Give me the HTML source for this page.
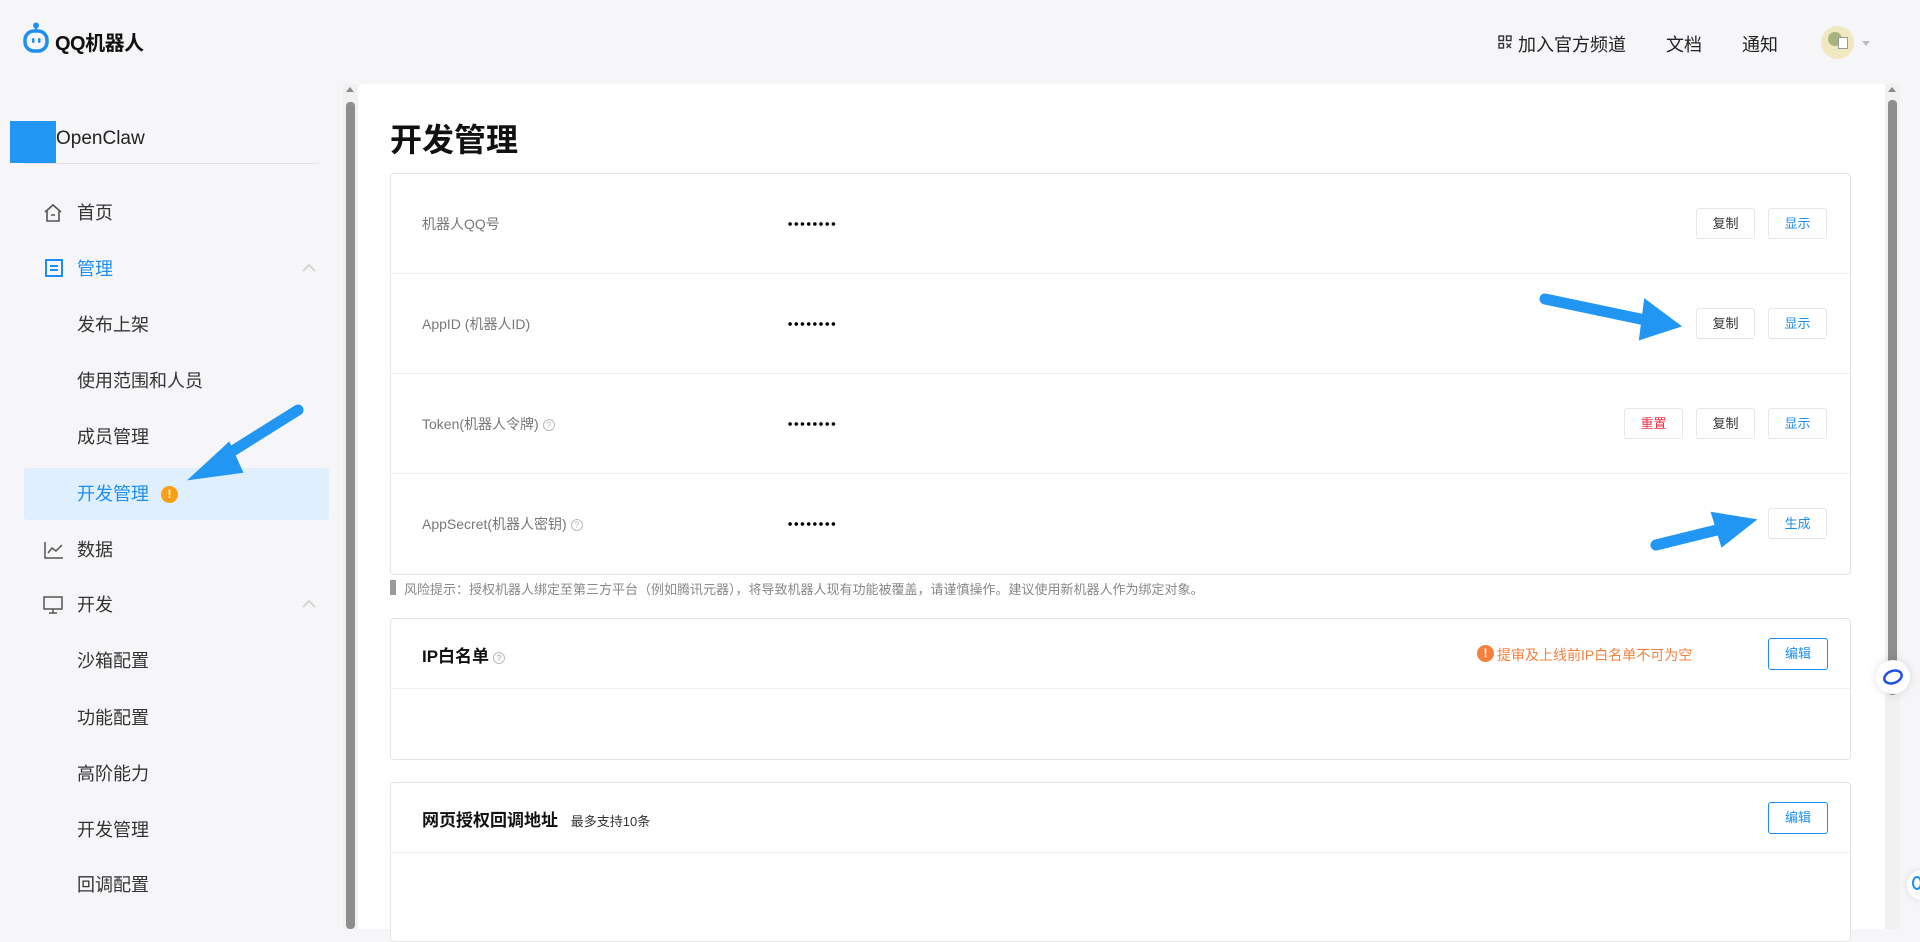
<!DOCTYPE html>
<html><head><meta charset="utf-8"><style>
*{margin:0;padding:0;box-sizing:border-box}
body{width:1920px;height:929px;overflow:hidden;background:#f6f6f8;font-family:"Liberation Sans","Noto Sans CJK SC",sans-serif;position:relative;color:#222}
.a{position:absolute}
.nav{font-size:18px;color:#222;top:31px}
.mi{position:absolute;left:77px;font-size:18px;color:#333;line-height:24px}
.card{position:absolute;left:390px;width:1461px;background:#fff;border:1px solid #e4e4e4;border-radius:4px}
.row{position:absolute;left:0;right:0;height:100px;border-bottom:1px solid #efefef}
.lbl{position:absolute;left:31px;top:40px;font-size:14px;color:#777}
.dots{position:absolute;left:396px;top:47px;width:50px;height:6px;background:radial-gradient(circle,#000 1.6px,transparent 2px) 0 0/6.2px 6px repeat-x}
.btn{position:absolute;top:34px;width:59px;height:31px;border:1px solid #e6e6e6;border-radius:3px;background:#fff;font-size:13px;text-align:center;line-height:29px;color:#333}
.q{display:inline-block;width:12px;height:12px;border:1px solid #bbb;border-radius:50%;font-size:9px;line-height:10px;text-align:center;color:#bbb;vertical-align:middle;margin-left:4px}
.eb{position:absolute;width:60px;height:32px;border:1px solid #1d8ff0;border-radius:3px;color:#1d8ff0;font-size:13px;text-align:center;line-height:30px}
</style></head><body>
<svg class="a" style="left:23px;top:22px" width="28" height="32" viewBox="0 0 28 32"><circle cx="13" cy="3.5" r="3" fill="#1d8ff0"/><rect x="12" y="4" width="2" height="5" fill="#1d8ff0"/><rect x="2" y="9" width="22" height="20" rx="9" fill="none" stroke="#1d8ff0" stroke-width="3.5"/><rect x="9" y="16" width="2.5" height="5" rx="1.2" fill="#1d8ff0"/><rect x="15" y="16" width="2.5" height="5" rx="1.2" fill="#1d8ff0"/></svg>
<div class="a" style="left:55px;top:27px;font-size:20px;font-weight:bold;color:#111;letter-spacing:-0.5px">QQ机器人</div>
<svg class="a" style="left:1498px;top:35px" width="14" height="14" viewBox="0 0 14 14" fill="none" stroke="#333" stroke-width="1.4"><rect x="1" y="1" width="4.5" height="4.5"/><rect x="8.5" y="1" width="4.5" height="4.5"/><rect x="1" y="8.5" width="4.5" height="4.5"/><path d="M8.5 8.5l4.5 4.5M13 8.5l-4.5 4.5"/></svg>
<div class="a nav" style="left:1518px">加入官方频道</div>
<div class="a nav" style="left:1666px">文档</div>
<div class="a nav" style="left:1742px">通知</div>
<div class="a" style="left:1821px;top:26px;width:33px;height:33px;border-radius:50%;background:#f0e8c0"></div>
<div class="a" style="left:1828px;top:32px;width:14px;height:14px;border-radius:50%;background:#a8b47e"></div>
<div class="a" style="left:1838px;top:37px;width:10px;height:12px;background:#fff;border:1px solid #999"></div>
<div class="a" style="left:1862px;top:41px;border:4px solid transparent;border-top:5px solid #bbb"></div>
<div class="a" style="left:10px;top:121px;width:46px;height:42px;background:#2196f3"></div>
<div class="a" style="left:56px;top:128px;font-size:19px;color:#222">OpenClaw</div>
<div class="a" style="left:24px;top:163px;width:295px;height:1px;background:#e2e2e6"></div>
<svg class="a" style="left:43px;top:203px" width="20" height="20" viewBox="0 0 20 20" fill="none" stroke="#555" stroke-width="1.6"><path d="M2 9L10 2l8 7M4 8v10h12V8M8 12h4"/></svg>
<div class="mi" style="top:201px">首页</div>
<svg class="a" style="left:45px;top:259px" width="18" height="18" viewBox="0 0 18 18" fill="none" stroke="#1d8ff0" stroke-width="2"><rect x="1" y="1" width="16" height="16"/><path d="M5 7h8M5 11h8"/></svg>
<div class="mi" style="top:257px;color:#1d8ff0">管理</div>
<svg class="a" style="left:302px;top:264px" width="14" height="8" viewBox="0 0 14 8" fill="none" stroke="#ccc" stroke-width="1.5"><path d="M1 7l6-6 6 6"/></svg>
<div class="mi" style="top:313px">发布上架</div>
<div class="mi" style="top:369px">使用范围和人员</div>
<div class="mi" style="top:425px">成员管理</div>
<div class="a" style="left:24px;top:468px;width:305px;height:52px;background:#dfeffd;border-radius:3px"></div>
<div class="mi" style="top:482px;color:#1d8ff0">开发管理</div>
<div class="a" style="left:161px;top:486px;width:17px;height:17px;border-radius:50%;background:#fa9e14;color:#fff;font-size:12px;font-weight:bold;text-align:center;line-height:17px">!</div>
<svg class="a" style="left:44px;top:541px" width="20" height="18" viewBox="0 0 20 18" fill="none" stroke="#555" stroke-width="1.5"><path d="M1 1v16h18M4 12l4-5 4 3 6-6"/></svg>
<div class="mi" style="top:538px">数据</div>
<svg class="a" style="left:43px;top:596px" width="20" height="18" viewBox="0 0 20 18" fill="none" stroke="#555" stroke-width="1.5"><rect x="1" y="1" width="18" height="12"/><path d="M6 17h8M10 13v4"/></svg>
<div class="mi" style="top:593px">开发</div>
<svg class="a" style="left:302px;top:600px" width="14" height="8" viewBox="0 0 14 8" fill="none" stroke="#ccc" stroke-width="1.5"><path d="M1 7l6-6 6 6"/></svg>
<div class="mi" style="top:649px">沙箱配置</div>
<div class="mi" style="top:706px">功能配置</div>
<div class="mi" style="top:762px">高阶能力</div>
<div class="mi" style="top:818px">开发管理</div>
<div class="mi" style="top:873px">回调配置</div>
<div class="a" style="left:343px;top:84px;width:15px;height:845px;background:#f1f1f1"></div>
<div class="a" style="left:346px;top:87px;border:4px solid transparent;border-bottom:5px solid #8a8a8a;border-top:0"></div>
<div class="a" style="left:346px;top:102px;width:9px;height:827px;background:#8d8d8d;border-radius:4px"></div>
<div class="a" style="left:358px;top:84px;width:1527px;height:845px;background:#fff;border-radius:6px 0 0 0"></div>
<div class="a" style="left:390px;top:115px;font-size:32px;font-weight:bold;color:#111">开发管理</div>
<div class="card" style="top:173px;height:402px">
 <div class="row" style="top:0"><div class="lbl">机器人QQ号</div><div class="dots"></div><div class="btn" style="left:1305px">复制</div><div class="btn" style="left:1377px;color:#1d8ff0">显示</div></div>
 <div class="row" style="top:100px"><div class="lbl">AppID (机器人ID)</div><div class="dots"></div><div class="btn" style="left:1305px">复制</div><div class="btn" style="left:1377px;color:#1d8ff0">显示</div></div>
 <div class="row" style="top:200px"><div class="lbl">Token(机器人令牌)<span class="q">?</span></div><div class="dots"></div><div class="btn" style="left:1233px;color:#f0304a">重置</div><div class="btn" style="left:1305px">复制</div><div class="btn" style="left:1377px;color:#1d8ff0">显示</div></div>
 <div class="row" style="top:300px;border:none"><div class="lbl">AppSecret(机器人密钥)<span class="q">?</span></div><div class="dots"></div><div class="btn" style="left:1377px;color:#1d8ff0">生成</div></div>
</div>
<div class="a" style="left:390px;top:580px;width:6px;height:15px;background:#9a9a9a"></div>
<div class="a" style="left:404px;top:579px;font-size:13px;color:#888">风险提示：授权机器人绑定至第三方平台（例如腾讯元器），将导致机器人现有功能被覆盖，请谨慎操作。建议使用新机器人作为绑定对象。</div>
<div class="card" style="top:618px;height:142px">
 <div class="a" style="left:0;right:0;top:0;height:70px;border-bottom:1px solid #efefef"></div>
 <div class="a" style="left:31px;top:23px;font-size:17px;font-weight:bold;color:#111">IP白名单<span class="q">?</span></div>
 <div class="a" style="left:1086px;top:26px;width:17px;height:17px;border-radius:50%;background:#f5803e;color:#fff;font-size:12px;font-weight:bold;text-align:center;line-height:17px">!</div>
 <div class="a" style="left:1106px;top:26px;font-size:14px;color:#f5803e">提审及上线前IP白名单不可为空</div>
 <div class="eb" style="left:1377px;top:19px">编辑</div>
</div>
<div class="card" style="top:782px;height:160px">
 <div class="a" style="left:0;right:0;top:0;height:70px;border-bottom:1px solid #efefef"></div>
 <div class="a" style="left:31px;top:23px;font-size:17px;font-weight:bold;color:#111">网页授权回调地址 <span style="font-size:13px;font-weight:normal;color:#333;margin-left:8px">最多支持10条</span></div>
 <div class="eb" style="left:1377px;top:19px">编辑</div>
</div>
<div class="a" style="left:1885px;top:84px;width:15px;height:845px;background:#f1f1f1"></div>
<div class="a" style="left:1888px;top:87px;border:4px solid transparent;border-bottom:5px solid #8a8a8a;border-top:0"></div>
<div class="a" style="left:1888px;top:100px;width:9px;height:595px;background:#8d8d8d;border-radius:4px"></div>
<div class="a" style="left:1876px;top:660px;width:34px;height:34px;border-radius:50%;background:#fff;box-shadow:0 0 10px rgba(0,0,0,.12)"></div>
<svg class="a" style="left:1882px;top:666px" width="22" height="22" viewBox="0 0 22 22" fill="none" stroke="#1e50e8" stroke-width="2.5"><ellipse cx="11" cy="11" rx="9" ry="6" transform="rotate(-20 11 11)"/></svg>
<div class="a" style="left:1907px;top:870px;width:30px;height:30px;border-radius:50%;background:#fff;box-shadow:0 0 8px rgba(0,0,0,.1)"></div>
<div class="a" style="left:1912px;top:876px;width:10px;height:14px;border-radius:50%;border:2px solid #1d8ff0"></div>
<svg class="a" style="left:0;top:0" width="1920" height="929">
<g fill="#2196f3" stroke="#2196f3">
<line x1="298" y1="410" x2="215" y2="462" stroke-width="11" stroke-linecap="round"/>
<polygon points="190,479 229,443 242,472" stroke-width="2"/>
<line x1="1545" y1="299" x2="1650" y2="321" stroke-width="11" stroke-linecap="round"/>
<polygon points="1680,326 1645,300 1640,339" stroke-width="2"/>
<line x1="1656" y1="545" x2="1725" y2="528" stroke-width="11" stroke-linecap="round"/>
<polygon points="1755,520 1712,513 1722,546" stroke-width="2"/>
</g></svg>
</body></html>
